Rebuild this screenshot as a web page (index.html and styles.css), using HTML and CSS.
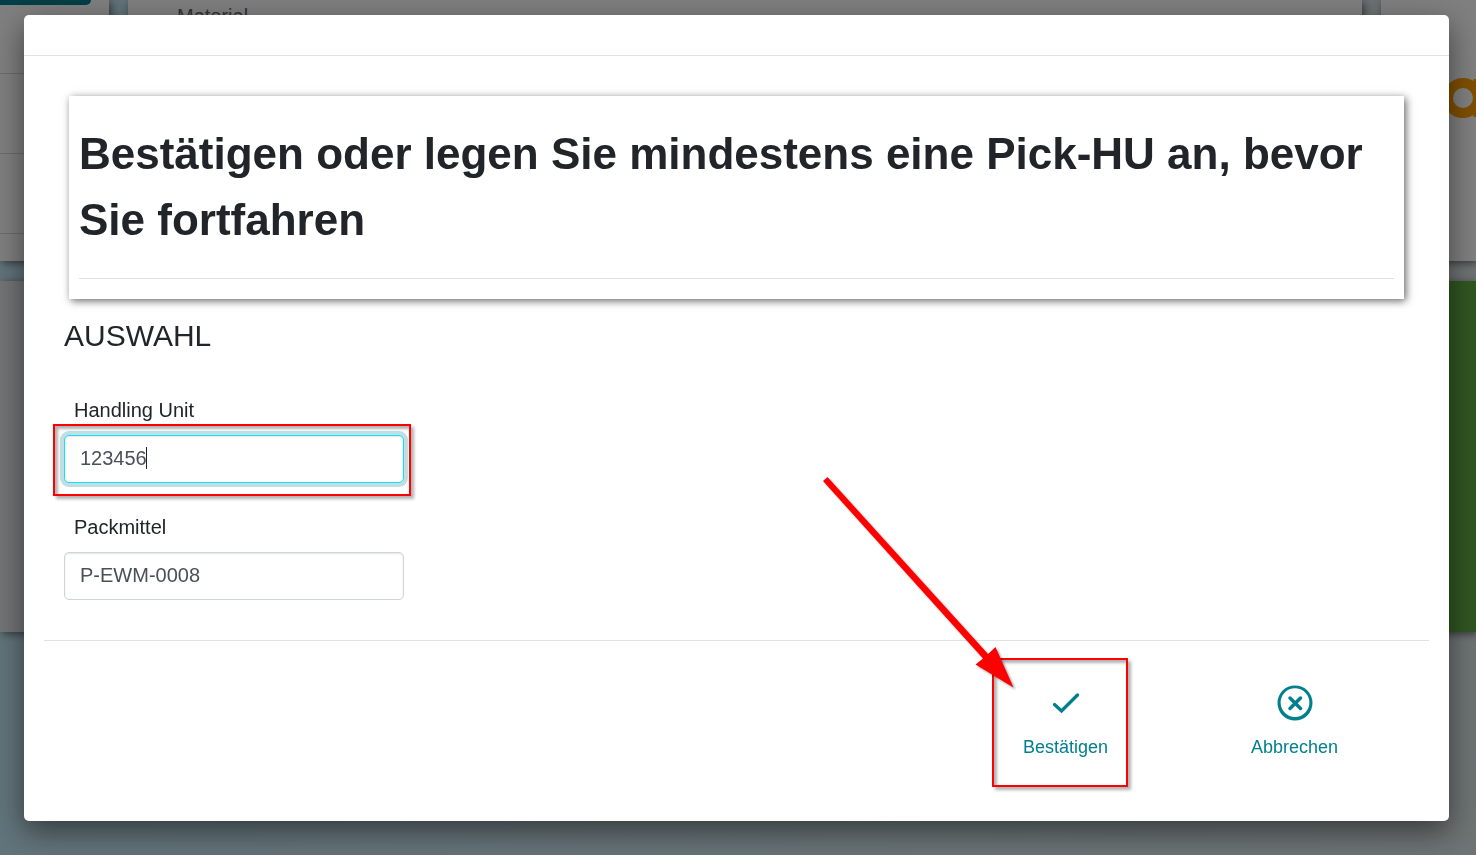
FILE: index.html
```
<!DOCTYPE html>
<html lang="de">
<head>
<meta charset="utf-8">
<title>Pick-HU</title>
<link rel="stylesheet" href="styles.css">
</head>
<body>
<main class="page">
  <section class="tile steps">
    <div class="step-bar"></div>
    <div class="step"></div>
    <div class="step"></div>
    <div class="step last"></div>
  </section>
  <section class="tile product">Material</section>
  <section class="tile brand">
    <svg class="logo" viewBox="0 0 64 40" aria-hidden="true">
      <circle cx="18" cy="20" r="15" fill="none" stroke="#ff9e00" stroke-width="10"/>
      <path d="M33 1v38" stroke="#ff9e00" stroke-width="9"/>
    </svg>
  </section>
  <section class="tile muted"></section>
  <section class="tile muted"></section>
  <section class="tile go"></section>
</main>
<div class="backdrop">
  <div class="modal" role="dialog" aria-modal="true" aria-labelledby="title">
    <header class="modal-header"></header>
    <div class="modal-body">
      <div class="notice">
        <h1 class="notice-title" id="title">Bestätigen oder legen Sie mindestens eine Pick-HU an, bevor Sie fortfahren</h1>
        <hr class="rule">
      </div>
      <h2 class="section-title">AUSWAHL</h2>
      <div class="field">
        <label class="label" for="hu">Handling Unit</label>
        <div class="control marked">
          <input class="input active" id="hu" type="text" value="123456">
          <span class="caret"></span>
        </div>
      </div>
      <div class="field">
        <label class="label" for="pack">Packmittel</label>
        <div class="control">
          <input class="input" id="pack" type="text" value="P-EWM-0008">
        </div>
      </div>
    </div>
    <footer class="modal-footer">
      <button class="action confirm" type="button">
        <svg class="icon" viewBox="0 0 44 44" aria-hidden="true">
          <path d="M10.500 23.500l7 6.500L33.500 14" fill="none" stroke="#007f8c" stroke-width="3.300" stroke-linecap="round"/>
        </svg>
        Bestätigen
        <svg class="arrow" viewBox="0 0 200 220" aria-hidden="true">
          <path d="M8 8L12.500 4L173 181L180.500 174L198.500 214.500L160.500 191.500L168 185.500z" fill="#f00"/>
        </svg>
      </button>
      <button class="action" type="button">
        <svg class="icon" viewBox="0 0 44 44" aria-hidden="true">
          <path fill="#007f8c" fill-rule="evenodd" d="M22 4.500a17.500 17.500 0 1 0 0 35a17.500 17.500 0 1 0 0-35zM22 7.200a14.400 14.400 0 1 1 0 28.800a14.400 14.400 0 1 1 0-28.800z"/>
          <path d="M17 17l10.500 10.500M27.500 17L17 27.500" fill="none" stroke="#007f8c" stroke-width="3.500" stroke-linecap="round"/>
        </svg>
        Abbrechen
      </button>
    </footer>
  </div>
</div>
</body>
</html>
```
FILE: styles.css
```
* { box-sizing: border-box; }

body {
  margin: 0;
  font-family: "Liberation Sans", Arial, sans-serif;
  font-size: 20px;
  line-height: 30px;
  color: #212529;
}

.page {
  display: grid;
  grid-template-columns: 109px 1fr 95px;
  grid-template-rows: 261px 351px;
  gap: 20px 19px;
  min-height: 100vh;
  background: linear-gradient(90deg, #c4e8f6, #dce6e8);
}

.tile {
  background: #fff;
  box-shadow: 2px 2px 8px rgba(0, 0, 0, 0.5);
}

.steps { display: flex; flex-direction: column; }

.step-bar {
  flex: none;
  width: 91px;
  height: 5px;
  margin-bottom: 68px;
  background: #007f8c;
  border-radius: 0 0 5px 0;
}

.step {
  flex: none;
  height: 80px;
  border-top: 1px solid #d8d8d8;
}

.last { height: 28px; }

.product { padding: 1px 49px; color: #666; }

.brand { padding: 78px 0 0 64px; overflow: hidden; }

.logo { display: block; width: 64px; height: 40px; }

.muted { background: #e6e8ec; }

.go { background: #60ac44; }

.backdrop {
  position: fixed;
  inset: 0;
  padding: 15px 27px 34px 24px;
  background: rgba(0, 0, 0, 0.5);
}

.modal {
  background: #fff;
  border-radius: 5px;
  box-shadow: 0 10px 30px rgba(0, 0, 0, 0.5);
}

.modal-header {
  height: 41px;
  border-bottom: 1px solid #dee2e6;
}

.modal-body { padding: 40px 40px 10px; }

.notice {
  margin: 0 5px;
  padding: 25px 10px 20px;
  box-shadow: 2px 2px 8px rgba(0, 0, 0, 0.6);
}

.notice-title {
  margin: 0 0 25px;
  font-size: 44px;
  line-height: 66px;
  font-weight: 700;
}

.rule {
  margin: 0;
  border: 0;
  border-top: 1px solid #dee2e6;
}

.section-title {
  margin: 15px 0 38px;
  font-size: 30px;
  line-height: 44px;
  font-weight: 400;
}

.field { width: 340px; margin-bottom: 30px; }

.label { display: block; margin: 0 10px 10px; line-height: 29px; }

.control { position: relative; }

.input {
  display: block;
  width: 100%;
  height: 48px;
  padding: 0 15px 2px;
  font: inherit;
  color: #495057;
  background: #fff;
  border: 1px solid #ced4da;
  border-radius: 5px;
  box-shadow: inset 0 1px 2px rgba(0, 0, 0, 0.1);
  outline: 0;
}

.active {
  border-color: #0de3fc;
  box-shadow: inset 0 1px 2px rgba(0, 0, 0, 0.1), 0 0 0 4px #bfdfe2;
}

.caret {
  position: absolute;
  left: 82px;
  top: 12px;
  width: 1px;
  height: 22px;
  background: #212529;
}

.marked::after,
.confirm::after {
  content: "";
  position: absolute;
  border: 2px solid #f00;
  box-shadow: 3px 3px 3px rgba(0, 0, 0, 0.3), inset 3px 3px 3px rgba(0, 0, 0, 0.3);
  pointer-events: none;
}

.marked::after { inset: -11px -7px -13px -11px; }

.modal-footer {
  display: flex;
  justify-content: flex-end;
  margin: 0 20px;
  padding: 40px 20px 62px;
  border-top: 1px solid #dee2e6;
}

.action {
  position: relative;
  display: flex;
  flex-direction: column;
  align-items: center;
  gap: 10px;
  width: 229px;
  padding: 0;
  font: inherit;
  font-size: 18px;
  line-height: 24px;
  color: #007f8c;
  background: none;
  border: 0;
}

.icon { width: 44px; height: 44px; }

.confirm::after { inset: -23px 52px -28px 41px; }

.arrow {
  position: absolute;
  z-index: 1;
  right: 165px;
  top: -208px;
  width: 200px;
  height: 220px;
  filter: drop-shadow(2px 2px 1px rgba(0, 0, 0, 0.35));
  pointer-events: none;
}
```
